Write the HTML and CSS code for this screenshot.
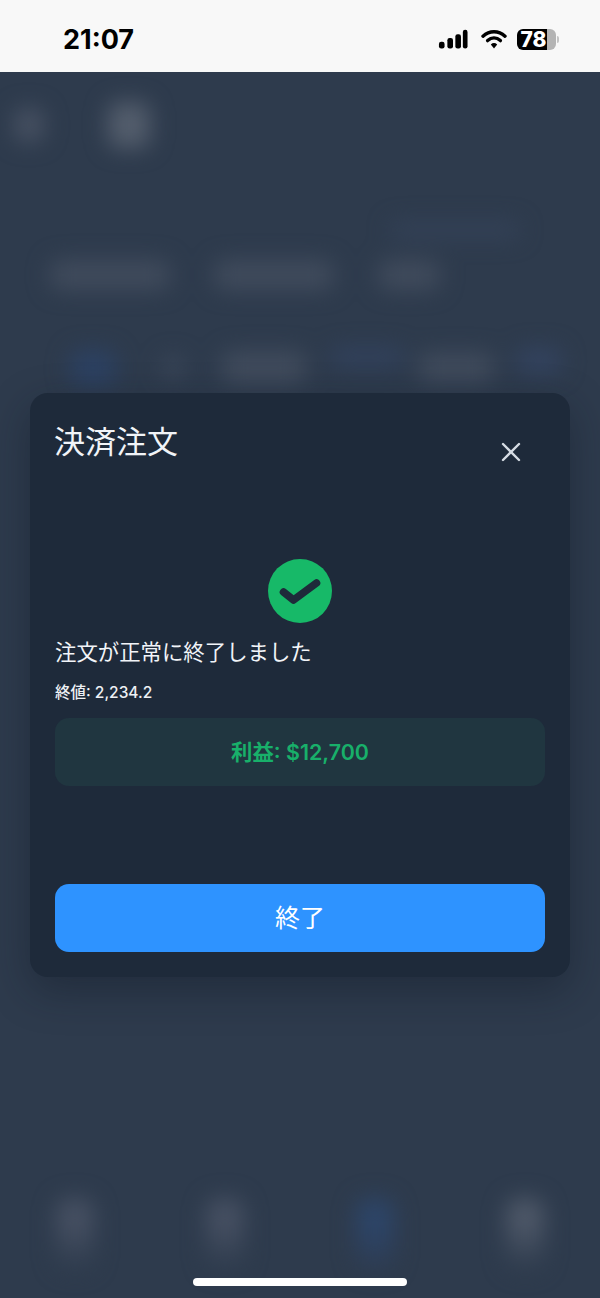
FILE: index.html
```html
<!DOCTYPE html>
<html lang="ja">

<head>
    <meta charset="UTF-8">
    <meta name="viewport" content="width=device-width, initial-scale=1.0">
    <title>決済注文</title>
    <link rel="stylesheet" href="styles.css">
</head>

<body>
    <div class="status-bar">
        <span class="time">21:07</span>
        <div class="status-icons">
            <svg class="signal" width="30" height="20" viewBox="0 0 32 20">
                <rect x="1" y="13" width="6" height="7" rx="2.4"></rect>
                <rect x="10" y="9" width="6" height="11" rx="2.4"></rect>
                <rect x="18.5" y="5" width="6" height="15" rx="2.4"></rect>
                <rect x="26.5" y="0" width="5" height="20" rx="2.4"></rect>
            </svg>
            <svg class="wifi" width="26" height="20" viewBox="0 0 26 20">
                <path d="M2 7.2 C8.4 1.3 17.6 1.3 24 7.2" fill="none" stroke="#000" stroke-width="3.4" stroke-linecap="round"></path>
                <path d="M6.6 11.6 C10.4 8.2 15.6 8.2 19.4 11.6" fill="none" stroke="#000" stroke-width="3.4" stroke-linecap="round"></path>
                <path d="M9.8 15.4 C11.8 13.6 14.2 13.6 16.2 15.4 L13 19.4 Z" fill="#000"></path>
            </svg>
            <div class="battery"><span>78</span></div>
            <div class="battery-tip"></div>
        </div>
    </div>

    <div class="screen">
        <div class="backdrop">
            <div class="blob-row top-row">
                <div class="blob blob-a"></div>
                <div class="blob blob-b"></div>
            </div>
            <div class="blob-row faint-row">
                <div class="blob blob-faint"></div>
            </div>
            <div class="blob-row tab-row">
                <div class="blob pill-a"></div>
                <div class="blob pill-b"></div>
                <div class="blob pill-c"></div>
            </div>
            <div class="blob-row chip-row">
                <div class="blob blue chip-a"></div>
                <div class="blob chip-b"></div>
                <div class="blob chip-c"></div>
                <div class="blob blue chip-d"></div>
                <div class="blob chip-e"></div>
                <div class="blob blue chip-f"></div>
            </div>
            <div class="blob-row nav-row">
                <div class="nav-item"></div>
                <div class="nav-item"></div>
                <div class="nav-item nav-active"></div>
                <div class="nav-item nav-last"></div>
            </div>
        </div>

        <div class="overlay">
            <div class="modal">
                <div class="modal-header">
                    <h2>決済注文</h2>
                    <svg class="close-icon" width="22" height="22" viewBox="0 0 22 22">
                        <path d="M3 3 L19 19 M19 3 L3 19" fill="none" stroke="#d6dce4" stroke-width="2.4" stroke-linecap="round"></path>
                    </svg>
                </div>
                <div class="check-wrap">
                    <svg width="64" height="64" viewBox="0 0 64 64">
                        <circle cx="32" cy="32" r="32" fill="#17b968"></circle>
                        <path d="M15.5 33 L25.5 41 L48.5 24" fill="none" stroke="#1e2a3a" stroke-width="7.6" stroke-linecap="round" stroke-linejoin="round"></path>
                    </svg>
                </div>
                <p class="message">注文が正常に終了しました</p>
                <p class="close-price">終値: 2,234.2</p>
                <div class="profit-box">利益: $12,700</div>
                <button class="finish-btn">終了</button>
            </div>
        </div>

        <div class="home-indicator"></div>
    </div>
</body>

</html>
```

FILE: styles.css
```css
* {
    box-sizing: border-box;
}

body {
    font-family: Inter, "Noto Sans CJK JP", sans-serif;
    margin: 0;
    padding: 0;
    width: 600px;
    height: 1298px;
    display: flex;
    flex-direction: column;
    overflow: hidden;
    background-color: #2e3b4d;
}

/* Status bar */
.status-bar {
    height: 72px;
    flex-shrink: 0;
    display: flex;
    justify-content: space-between;
    align-items: center;
    padding: 6px 41px 0 63px;
    background-color: #f8f8f8;
}

.time {
    font-size: 27px;
    font-weight: 700;
    color: #000;
}

.status-icons {
    display: flex;
    align-items: center;
}

.signal {
    fill: #000;
    margin-right: 13px;
}

.wifi {
    margin-right: 10px;
}

.battery {
    width: 39px;
    height: 21px;
    border-radius: 6px;
    background: linear-gradient(to right, #000 78%, #b4b4b4 78%);
    display: flex;
    align-items: center;
    justify-content: center;
    color: #fff;
    font-size: 21px;
    font-weight: 800;
    line-height: 1;
}

.battery span {
    margin-right: 6px;
}

.battery-tip {
    width: 2px;
    height: 7px;
    margin-left: 1px;
    border-radius: 0 2px 2px 0;
    background-color: #c4c4c4;
}

/* Blurred page behind the dialog */
.screen {
    position: relative;
    flex: 1;
    overflow: hidden;
    background-color: #2e3b4d;
}

.backdrop {
    height: 100%;
    display: flex;
    flex-direction: column;
    filter: blur(11px);
}

.blob-row {
    display: flex;
    align-items: center;
}

.blob {
    background-color: #404b5c;
    border-radius: 10px;
}

.blob.blue {
    background-color: #2c4162;
}

.top-row {
    margin-top: 30px;
    padding-left: 14px;
    gap: 64px;
}

.blob-a {
    width: 30px;
    height: 34px;
    background-color: #475162;
}

.blob-b {
    width: 42px;
    height: 46px;
    background-color: #535d6c;
}

.faint-row {
    margin-top: 74px;
    padding-left: 390px;
}

.blob-faint {
    width: 130px;
    height: 16px;
    background-color: #344258;
}

.tab-row {
    margin-top: 22px;
    padding-left: 50px;
    gap: 44px;
}

.pill-a,
.pill-b {
    width: 120px;
    height: 30px;
}

.pill-c {
    width: 62px;
    height: 30px;
}

.chip-row {
    margin-top: 60px;
    padding-left: 70px;
}

.chip-a {
    width: 46px;
    height: 36px;
}

.chip-b {
    width: 22px;
    height: 24px;
    margin-left: 46px;
    background-color: #3b4759;
}

.chip-c {
    width: 84px;
    height: 34px;
    margin-left: 38px;
}

.blob.chip-d {
    width: 74px;
    height: 18px;
    margin: -22px 0 0 24px;
    background-color: #32425e;
}

.chip-e {
    width: 76px;
    height: 30px;
    margin-left: 14px;
}

.blob.chip-f {
    width: 46px;
    height: 26px;
    margin: -14px 0 0 22px;
    background-color: #33435f;
}

.nav-row {
    margin-top: auto;
    margin-bottom: 28px;
    padding: 0 56px 0 56px;
    justify-content: space-between;
}

.nav-item {
    width: 38px;
    height: 72px;
    border-radius: 14px;
    background: linear-gradient(to bottom, #465062 0%, #465062 35%, #2e3b4d 100%);
}

.nav-active {
    background: linear-gradient(to bottom, #2d4568 0%, #2d4568 40%, #2e3c52 100%);
}

.nav-last {
    background: linear-gradient(to bottom, #4e5868 0%, #4e5868 35%, #2e3b4d 100%);
}

/* Dialog */
.overlay {
    position: absolute;
    top: 0;
    right: 0;
    bottom: 0;
    left: 0;
    display: flex;
    justify-content: center;
    align-items: center;
}

.modal {
    width: 540px;
    height: 584px;
    padding: 25px;
    display: flex;
    flex-direction: column;
    background-color: #1e2a3a;
    border-radius: 18px;
    box-shadow: 0 14px 40px rgba(15, 23, 35, 0.4);
}

.modal-header {
    display: flex;
    justify-content: space-between;
    align-items: flex-start;
}

.modal-header h2 {
    margin: 2px 0 0 -1px;
    font-size: 31px;
    font-weight: 400;
    line-height: 44px;
    color: #f1f4f8;
}

.close-icon {
    margin: 23px 23px 0 0;
}

.check-wrap {
    margin-top: 95px;
    display: flex;
    justify-content: center;
}

.message {
    margin: 14px 0 0;
    font-size: 21.4px;
    line-height: 30px;
    color: #f1f4f8;
}

.close-price {
    margin: 15px 0 0;
    font-size: 15.5px;
    font-weight: 500;
    line-height: 22px;
    color: #eef1f5;
}

.profit-box {
    height: 68px;
    margin-top: 14px;
    padding-bottom: 3px;
    display: flex;
    justify-content: center;
    align-items: center;
    border-radius: 14px;
    background-color: #203640;
    color: #18b06a;
    font-size: 21.4px;
    font-weight: 600;
}

.finish-btn {
    height: 68px;
    margin-top: auto;
    padding-bottom: 5px;
    border: none;
    border-radius: 14px;
    background-color: #2e93ff;
    color: #fff;
    font-family: inherit;
    font-size: 25px;
    cursor: pointer;
}

.home-indicator {
    position: absolute;
    left: 193px;
    bottom: 12px;
    width: 214px;
    height: 8px;
    border-radius: 4px;
    background-color: #fff;
}
```
